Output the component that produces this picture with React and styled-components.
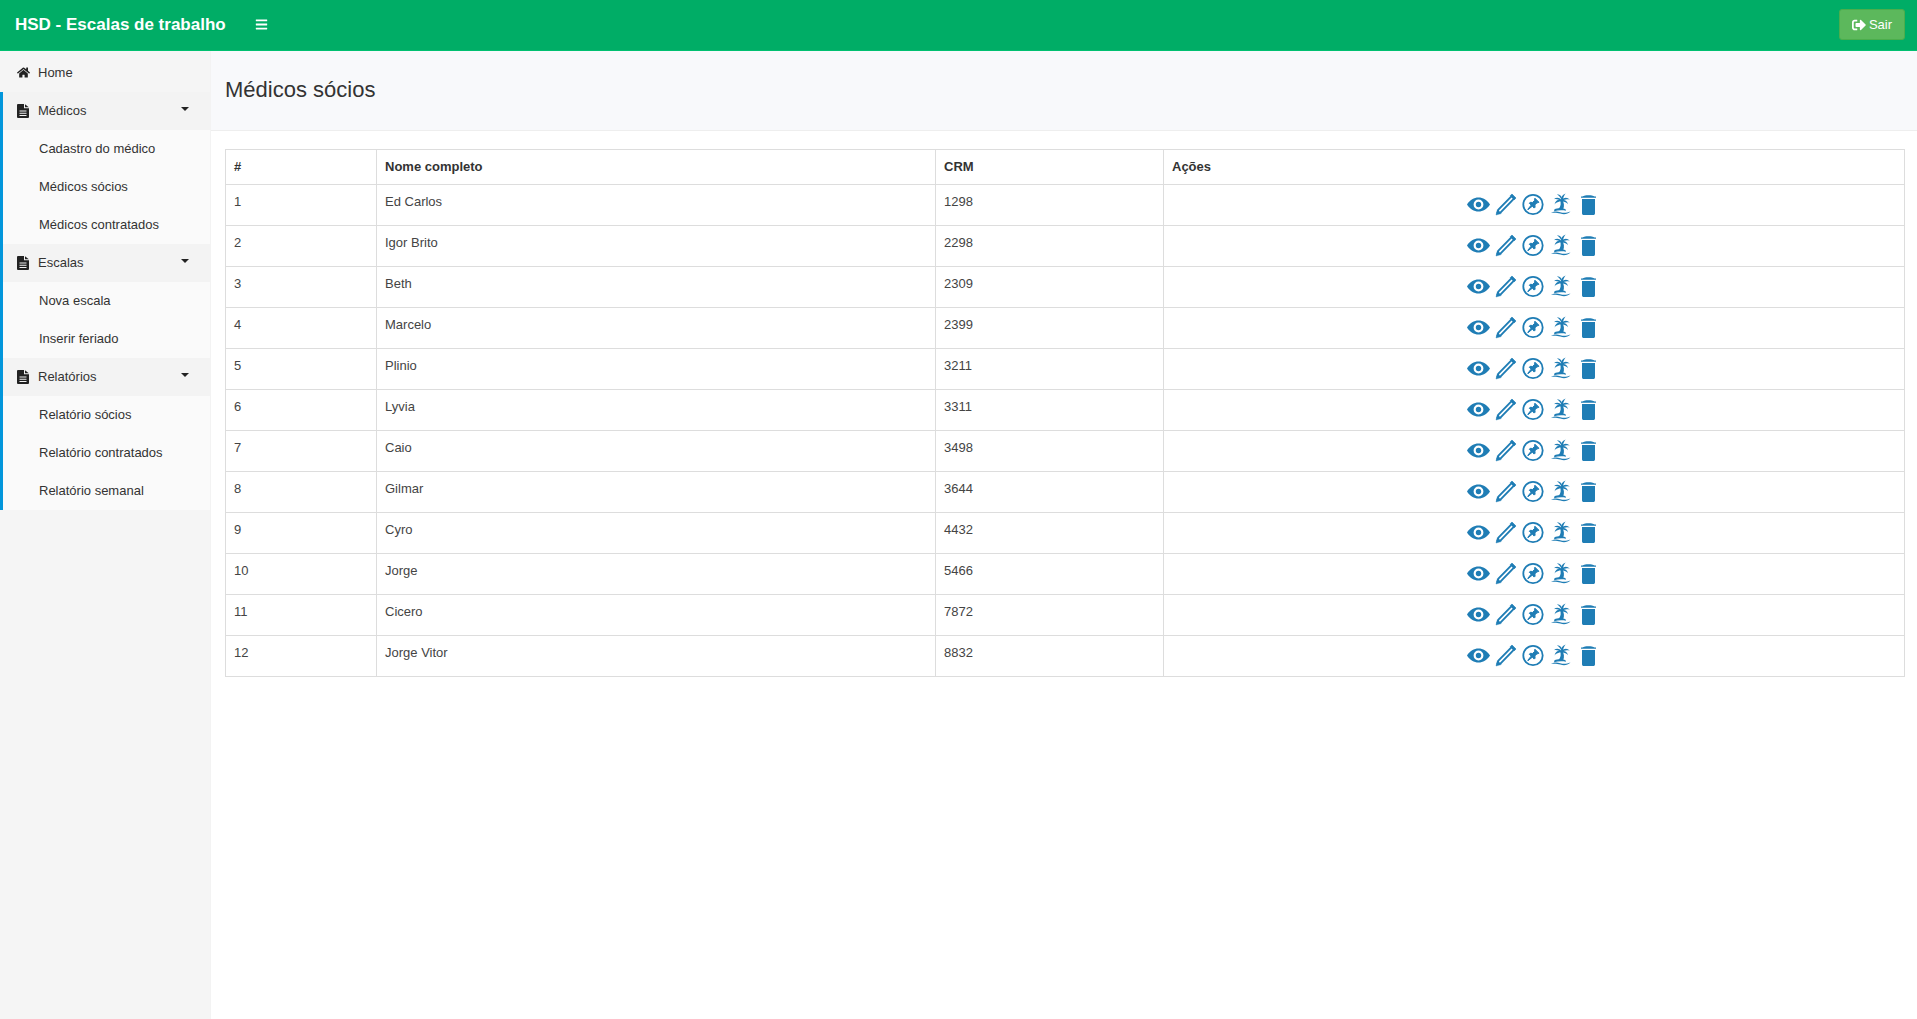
import React from "react";
import styled, { createGlobalStyle } from "styled-components";
import { FaBars, FaHome, FaSignOutAlt } from "react-icons/fa";

const medicos = [
  [1, "Ed Carlos", 1298],
  [2, "Igor Brito", 2298],
  [3, "Beth", 2309],
  [4, "Marcelo", 2399],
  [5, "Plinio", 3211],
  [6, "Lyvia", 3311],
  [7, "Caio", 3498],
  [8, "Gilmar", 3644],
  [9, "Cyro", 4432],
  [10, "Jorge", 5466],
  [11, "Cicero", 7872],
  [12, "Jorge Vitor", 8832],
];

const menus = [
  { title: "Médicos", items: ["Cadastro do médico", "Médicos sócios", "Médicos contratados"] },
  { title: "Escalas", items: ["Nova escala", "Inserir feriado"] },
  { title: "Relatórios", items: ["Relatório sócios", "Relatório contratados", "Relatório semanal"] },
];

const FileIcon = () => (
  <svg width="12" height="14" viewBox="0 0 12 14" fill="currentColor">
    <path
      fillRule="evenodd"
      d="M1 0h6v4.200h5V13a1 1 0 0 1-1 1H1a1 1 0 0 1-1-1V1a1 1 0 0 1 1-1ZM2.500 6.500v1h7v-1ZM2.500 8.700v1h7v-1ZM2.500 10.900v1h7v-1Z"
    />
    <path d="M8 0.300 11.800 3.300H8Z" />
  </svg>
);

const EyeIcon = () => (
  <svg width="23" height="23" viewBox="0 0 23 23" fill="currentColor">
    <path
      fillRule="evenodd"
      d="M0 11.500C3 6.800 7 4.500 11.500 4.500S20 6.800 23 11.500C20 16.200 16 18.500 11.500 18.500S3 16.200 0 11.500ZM11.500 6.600a4.900 4.900 0 1 0 0 9.800 4.900 4.900 0 0 0 0-9.800Z"
    />
    <circle cx="11.500" cy="11.500" r="2.700" />
  </svg>
);

const PencilIcon = () => (
  <svg width="22" height="23" viewBox="0 0 22 23" fill="none" stroke="currentColor">
    <path d="M3.400 16.600 16.600 3.200l2.400 2.400L5.900 19.100l-3.600 1 1.100-3.500Z" strokeWidth="1.900" strokeLinejoin="round" />
    <path d="M15.300 2.600 17 1l4 4-1.600 1.700Z" fill="currentColor" strokeWidth="0.600" />
    <path d="M1 22 2.400 16.800l3.800 3.800Z" fill="currentColor" strokeWidth="0.400" />
  </svg>
);

const PinIcon = () => (
  <svg width="22" height="23" viewBox="0 0 22 23" fill="none" stroke="currentColor">
    <circle cx="11" cy="11.500" r="9.700" strokeWidth="1.800" />
    <path
      d="M12.900 5.200l4 4-1.100.7-.6-.3-2.300 2.300.2 2.300-.9.900-1.900-1.900-4.300 3.500-.3-.3 3.500-4.300-1.900-1.900.9-.9 2.300.2 2.300-2.300-.3-.6Z"
      fill="currentColor"
    />
  </svg>
);

const PalmIcon = () => (
  <svg width="20" height="23" viewBox="0 0 20 23" fill="currentColor">
    <path d="M9 7c1.200 3 1 6.300-1.600 9.300h4.800C13.600 13 13 9.500 11.300 7Z" />
    <path d="M3.500 16.300c3-1.300 8-1.300 11 0l.5 1.500c-3.500-.8-8-.6-12 .4Z" />
    <path d="M10.300 7C8.500 4.600 5.700 4 2.800 6.200c2.600-.6 4.600 0 7.500 1.800Z" />
    <path d="M10.300 7c-.5-2.900.7-5.200 4.300-6.500-1.300 1.700-2.300 3.500-2.900 6.700Z" />
    <path d="M10.300 6.600c-3-.6-6 .8-6.800 4.800C5 9.400 7.500 8.500 10.800 8Z" />
    <path d="M10.200 7c3-3 6.400-3 8.600-.2-2.600-.9-5.300-.5-8 1Z" />
    <path d="M10 7.300c3.200-1 6-.1 7 3.900-1.600-2-3.900-3-6.700-2.700Z" />
    <path d="M10.600 7.200C9.500 4.500 8.200 2.800 6 1.300c3-.2 5 2 5.300 5.500Z" />
    <path d="M0 20c3.400-1.800 5.800-1.800 9.200-.8 3.600 1 6.500.8 10.300-.8-3 3-6.500 3.200-10.200 2.200-3.600-1-6-1-9.300-.6Z" />
  </svg>
);

const TrashIcon = () => (
  <svg width="15" height="23" viewBox="0 0 15 23" fill="currentColor">
    <path d="M0 3.600h1.300C3 2.800 5 2.300 7.500 2.300s4.500.5 6.200 1.300H15v1.200H0Z" />
    <path d="M1 6h13v14.200c0 1-.7 1.800-1.700 1.800H2.700C1.700 22 1 21.200 1 20.200Z" />
  </svg>
);

const acoes = [EyeIcon, PencilIcon, PinIcon, PalmIcon, TrashIcon];

export default function App() {
  return (
    <>
      <GlobalStyle />
      <Navbar>
        <NavLeft>
          <Brand>HSD - Escalas de trabalho</Brand>
          <Toggle>
            <FaBars />
          </Toggle>
        </NavLeft>
        <SairButton>
          <FaSignOutAlt />
          Sair
        </SairButton>
      </Navbar>
      <Body>
        <Sidebar>
          <HomeLink>
            <FaHome />
            Home
          </HomeLink>
          <MenuGroup>
            {menus.map((menu) => (
              <div key={menu.title}>
                <MenuHead>
                  <FileIcon />
                  {menu.title}
                  <Caret />
                </MenuHead>
                {menu.items.map((item) => (
                  <SubItem key={item}>{item}</SubItem>
                ))}
              </div>
            ))}
          </MenuGroup>
        </Sidebar>
        <Main>
          <PageHeader>
            <h1>Médicos sócios</h1>
          </PageHeader>
          <Content>
            <Table>
              <colgroup>
                <col style={{ width: 151 }} />
                <col style={{ width: 559 }} />
                <col style={{ width: 228 }} />
                <col />
              </colgroup>
              <thead>
                <tr>
                  <th>#</th>
                  <th>Nome completo</th>
                  <th>CRM</th>
                  <th>Ações</th>
                </tr>
              </thead>
              <tbody>
                {medicos.map(([id, nome, crm]) => (
                  <tr key={id}>
                    <td>{id}</td>
                    <td>{nome}</td>
                    <td>{crm}</td>
                    <td>
                      <Actions>
                        {acoes.map((Icon, i) => (
                          <Icon key={i} />
                        ))}
                      </Actions>
                    </td>
                  </tr>
                ))}
              </tbody>
            </Table>
          </Content>
        </Main>
      </Body>
    </>
  );
}

const GlobalStyle = createGlobalStyle`
  html, body {
    margin: 0;
    padding: 0;
  }
  body {
    font-family: "Liberation Sans", Arial, sans-serif;
    font-size: 13px;
    line-height: 18px;
    color: #333;
    background: #fff;
  }
  * {
    box-sizing: border-box;
  }
`;

const Navbar = styled.header`
  height: 51px;
  display: flex;
  align-items: center;
  justify-content: space-between;
  padding: 0 12px 1px 15px;
  background: #00ad66;
  border-bottom: 1px solid #00c070;
`;

const NavLeft = styled.div`
  display: flex;
  align-items: center;
`;

const Brand = styled.div`
  width: 240px;
  font-size: 17px;
  font-weight: bold;
  color: #fff;
`;

const Toggle = styled.div`
  display: flex;
  color: #fff;
  font-size: 13px;
`;

const SairButton = styled.button`
  width: 66px;
  height: 31px;
  display: flex;
  align-items: center;
  justify-content: center;
  gap: 3px;
  padding: 0;
  font: inherit;
  color: #fff;
  background: #5cb85c;
  border: 1px solid #4cae4c;
  border-radius: 3px;
  svg {
    width: 14px;
    height: 14px;
  }
`;

const Body = styled.div`
  display: flex;
  min-height: 968px;
`;

const Sidebar = styled.nav`
  width: 211px;
  flex: none;
  background: #f5f5f5;
  border-right: 1px solid #f3f3f3;
`;

const HomeLink = styled.div`
  height: 41px;
  display: flex;
  align-items: center;
  gap: 8px;
  padding: 2px 0 0 17px;
  svg {
    width: 13px;
    height: 13px;
    color: #222;
  }
`;

const MenuGroup = styled.div`
  border-left: 3px solid #0296db;
`;

const MenuHead = styled.div`
  position: relative;
  height: 38px;
  display: flex;
  align-items: center;
  gap: 9px;
  padding-left: 14px;
  background: #f3f3f3;
  svg {
    color: #222;
  }
`;

const Caret = styled.span`
  position: absolute;
  right: 21px;
  top: 15px;
  border-top: 4px solid #222;
  border-left: 4px solid transparent;
  border-right: 4px solid transparent;
`;

const SubItem = styled.div`
  height: 38px;
  display: flex;
  align-items: center;
  padding-left: 36px;
  background: #fafafa;
`;

const Main = styled.main`
  flex: 1;
  min-width: 0;
`;

const PageHeader = styled.div`
  height: 80px;
  display: flex;
  align-items: center;
  padding: 0 14px 1px;
  background: #f8f9fb;
  border-bottom: 1px solid #eee;
  h1 {
    margin: 0;
    font-size: 22px;
    line-height: 30px;
    font-weight: 400;
    color: #333;
  }
`;

const Content = styled.div`
  padding: 18px 12px 0 14px;
`;

const Table = styled.table`
  width: 100%;
  table-layout: fixed;
  border-collapse: collapse;
  th,
  td {
    border: 1px solid #ddd;
    padding: 8px;
    text-align: left;
    vertical-align: top;
  }
  thead th {
    height: 35px;
    font-weight: bold;
  }
  tbody td {
    height: 41px;
    color: #444;
  }
`;

const Actions = styled.div`
  display: grid;
  grid-template-columns: repeat(5, 27.5px);
  justify-content: center;
  justify-items: center;
  color: #1f7db5;
  padding-right: 2px;
  svg {
    display: block;
  }
`;
